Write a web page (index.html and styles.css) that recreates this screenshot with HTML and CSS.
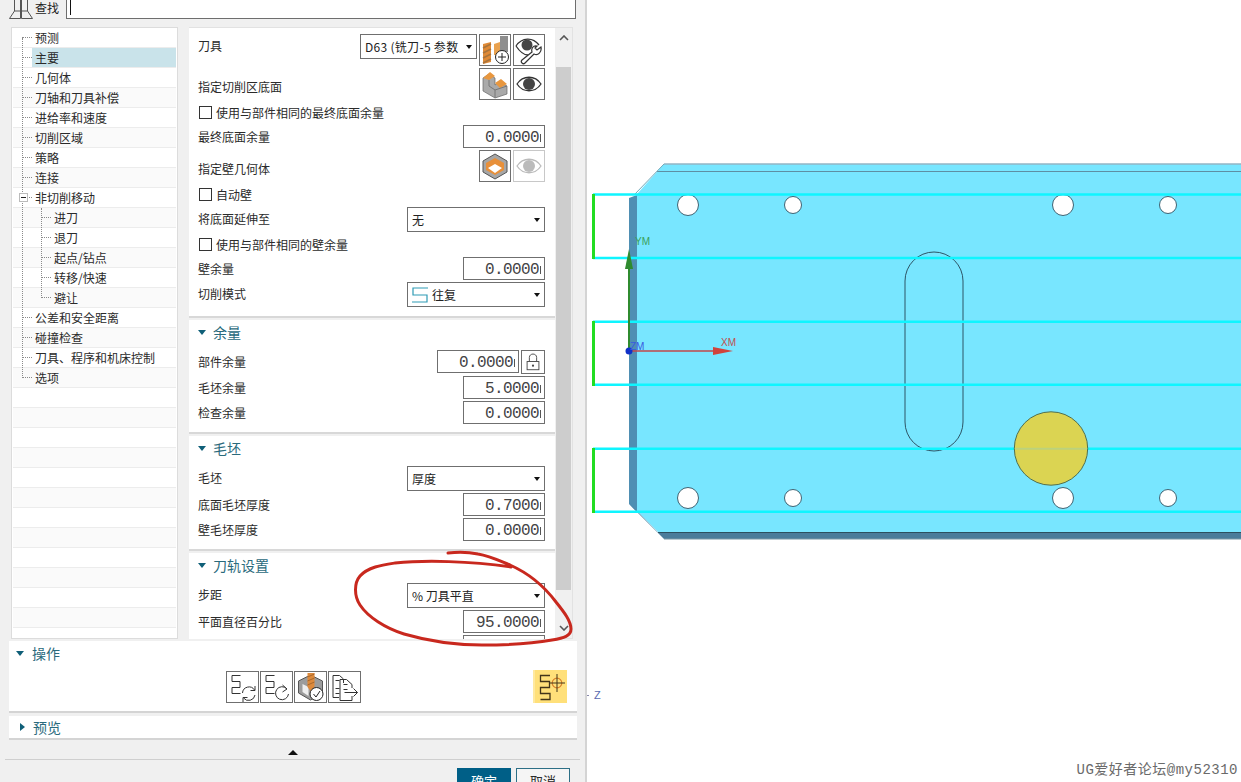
FILE: index.html
```html
<!DOCTYPE html>
<html lang="zh">
<head>
<meta charset="utf-8">
<title>UG</title>
<link rel="stylesheet" href="styles.css">
</head>
<body>
<div class="app">
  <div class="dialog">
    <div class="find">
      <svg class="bino" viewBox="0 0 24 19"><path d="M5.500 0 V11 L.5 18.500 H11.500 V0 M5.500 11 H11.500 M12.500 0 V18.500 H23.500 L18.500 11 V0 M12.500 11 H18.500 M11.500 5.500 H12.500" fill="none" stroke="#555" stroke-width="1"/></svg>
      <span class="find-label">查找</span>
      <div class="find-input"><i class="caret"></i></div>
    </div>
    <div class="main">
      <div class="tree">
        <i class="vline1"></i><i class="vline2"></i>
        <div class="node">预测</div>
        <div class="node sel">主要</div>
        <div class="node">几何体</div>
        <div class="node">刀轴和刀具补偿</div>
        <div class="node">进给率和速度</div>
        <div class="node">切削区域</div>
        <div class="node">策略</div>
        <div class="node">连接</div>
        <div class="node"><i class="minus"></i>非切削移动</div>
        <div class="node sub">进刀</div>
        <div class="node sub">退刀</div>
        <div class="node sub">起点/钻点</div>
        <div class="node sub">转移/快速</div>
        <div class="node sub">避让</div>
        <div class="node">公差和安全距离</div>
        <div class="node">碰撞检查</div>
        <div class="node">刀具、程序和机床控制</div>
        <div class="node">选项</div>
        <div class="node empty"></div><div class="node empty"></div><div class="node empty"></div><div class="node empty"></div>
        <div class="node empty"></div><div class="node empty"></div><div class="node empty"></div><div class="node empty"></div>
        <div class="node empty"></div><div class="node empty"></div><div class="node empty"></div><div class="node empty"></div><div class="node empty"></div>
      </div>
      <div class="panel">
        <div class="sections">
          <section class="sec first">
            <div class="row r34">
              <span class="lbl">刀具</span>
              <div class="tools">
                <div class="combo c-tool"><span class="clip">D63 (铣刀-5 参数</span><i class="arrow"></i></div>
                <button class="ib"><svg viewBox="0 0 30 30"><path d="M3 9 L11 7 V27 L3 29 Z" fill="#e08a36"/><path d="M3 13 L11 9 M3 18 L11 14 M3 23 L11 19 M3 28 L11 24" stroke="#a8743c" stroke-width="1.600"/><path d="M14 9 L20 7 V20 H14 Z" fill="#e9a24f"/><path d="M20 1 H28 V17 H20 Z" fill="#8e8e8e"/><circle cx="22" cy="22" r="6.500" fill="#fff" stroke="#222"/><path d="M22 18 V26 M18 22 H26" stroke="#222"/></svg></button>
                <button class="ib"><svg viewBox="0 0 30 30"><path d="M2 11 C8 2 19 2 25 10" fill="none" stroke="#333" stroke-width="1.300"/><path d="M2 11 C6 17 10 20 14 20" fill="none" stroke="#333" stroke-width="1.300"/><circle cx="13" cy="10" r="5.500" fill="#444"/><path d="M27 12 L23 15 L21 13 L23 11 C19 10 17 14 18 17 L8 25 C6 27 9 30 11 28 L20 19 C24 21 28 17 27 12 Z" fill="#fff" stroke="#333" stroke-width="1.200"/></svg></button>
              </div>
            </div>
            <div class="row r2">
              <span class="lbl low">指定切削区底面</span>
              <div class="tools">
                <button class="ib"><svg viewBox="0 0 30 30"><path d="M3 9 L9 5 L15 9 V16 L19 13 L27 17 V25 L15 29 L3 22 Z" fill="#a9a9a9" stroke="#666" stroke-width=".7"/><path d="M3 9 L10 3 L15 7 L9 11 Z M15 14 L21 10 L27 15 L20 19 Z" fill="#e8973f"/><path d="M9 11 V17 L15 21 V29" fill="none" stroke="#777"/><path d="M15 21 L27 17" stroke="#777"/></svg></button>
                <button class="ib"><svg viewBox="0 0 30 30"><path d="M3 15 C9 6 21 6 27 15 C21 24 9 24 3 15 Z" fill="#fff" stroke="#333" stroke-width="1.300"/><circle cx="15" cy="15" r="6" fill="#444"/></svg></button>
              </div>
            </div>
            <div class="row r25"><label class="chk"><i class="box"></i>使用与部件相同的最终底面余量</label></div>
            <div class="row r25"><span class="lbl">最终底面余量</span><div class="num"><span>0.0000</span></div></div>
            <div class="row r32">
              <span class="lbl low">指定壁几何体</span>
              <div class="tools">
                <button class="ib"><svg viewBox="0 0 30 30"><path d="M15 3 L27 10 V21 L15 28 L3 21 V10 Z" fill="#a6a6a6" stroke="#555"/><path d="M15 7 L24 12 V19 L15 24 L6 19 V12 Z" fill="#e8903a"/><path d="M8 17 L15 13 L22 17 L15 22 Z" fill="#fff"/></svg></button>
                <button class="ib off"><svg viewBox="0 0 30 30"><path d="M3 15 C9 6 21 6 27 15 C21 24 9 24 3 15 Z" fill="#fff" stroke="#bbb" stroke-width="1.300"/><circle cx="15" cy="15" r="6" fill="#bbb"/></svg></button>
              </div>
            </div>
            <div class="row r25"><label class="chk"><i class="box"></i>自动壁</label></div>
            <div class="row r25"><span class="lbl">将底面延伸至</span><div class="combo"><span>无</span><i class="arrow"></i></div></div>
            <div class="row r25"><label class="chk"><i class="box"></i>使用与部件相同的壁余量</label></div>
            <div class="row r25"><span class="lbl">壁余量</span><div class="num"><span>0.0000</span></div></div>
            <div class="row r26"><span class="lbl">切削模式</span><div class="combo"><svg class="zig" viewBox="0 0 16 16"><path d="M16 1 H1 V8 H15 V15 H0" fill="none" stroke="#2f9bb5" stroke-width="1.200"/></svg><span>往复</span><i class="arrow"></i></div></div>
          </section>
          <section class="sec s2">
            <h3 class="head"><i class="tri"></i>余量</h3>
            <div class="row r26 top4">
              <span class="lbl">部件余量</span>
              <div class="tools"><div class="num"><span>0.0000</span></div>
                <button class="ib lock"><svg viewBox="0 0 22 22"><rect x="4.500" y="10.500" width="13" height="9" fill="#fff" stroke="#444"/><path d="M7 10 V6 C7 1 15 1 15 6 V10" fill="none" stroke="#444"/><circle cx="11" cy="15" r="1.200" fill="#444"/></svg></button>
              </div>
            </div>
            <div class="row r25"><span class="lbl">毛坯余量</span><div class="num"><span>5.0000</span></div></div>
            <div class="row r25"><span class="lbl">检查余量</span><div class="num"><span>0.0000</span></div></div>
          </section>
          <section class="sec s3">
            <h3 class="head"><i class="tri"></i>毛坯</h3>
            <div class="row r27 top4"><span class="lbl">毛坯</span><div class="combo"><span>厚度</span><i class="arrow"></i></div></div>
            <div class="row r25"><span class="lbl">底面毛坯厚度</span><div class="num"><span>0.7000</span></div></div>
            <div class="row r25"><span class="lbl">壁毛坯厚度</span><div class="num"><span>0.0000</span></div></div>
          </section>
          <section class="sec last">
            <h3 class="head"><i class="tri"></i>刀轨设置</h3>
            <div class="row r27 top4"><span class="lbl">步距</span><div class="combo"><span>% 刀具平直</span><i class="arrow"></i></div></div>
            <div class="row r25"><span class="lbl">平面直径百分比</span><div class="num"><span>95.0000</span></div></div>
            <div class="row r25"><span class="lbl"></span><div class="num blank"></div></div>
          </section>
        </div>
        <div class="scroll">
          <svg class="sarrow" viewBox="0 0 10 6"><path d="M1 5 L5 1 L9 5" fill="none" stroke="#555" stroke-width="1.600"/></svg>
          <div class="thumb"></div>
          <svg class="sarrow" viewBox="0 0 10 6"><path d="M1 1 L5 5 L9 1" fill="none" stroke="#555" stroke-width="1.600"/></svg>
        </div>
      </div>
    </div>
    <section class="wide ops">
      <h3 class="head"><i class="tri"></i>操作</h3>
      <div class="opbar">
        <div class="opgroup">
          <button class="ib"><svg viewBox="0 0 30 30"><path d="M13 3.500 H4.500 V9.500 H12.500 V15.500 H4.500 V21.500 H13" fill="none" stroke="#333"/><path d="M15 21 A6.500 6.500 0 0 1 27 18 M27.500 23 A6.500 6.500 0 0 1 16 26 M27.500 14 V18.500 H23 M15.500 30 V25.500 H20" fill="none" stroke="#333"/></svg></button>
          <button class="ib"><svg viewBox="0 0 30 30"><path d="M13 3.500 H4.500 V9.500 H12.500 V15.500 H4.500 V21.500 H13" fill="none" stroke="#333"/><path d="M25.500 17 A6.500 6.500 0 1 0 27 22 M21 13 L25.500 17 L21 20" fill="none" stroke="#333"/></svg></button>
          <button class="ib"><svg viewBox="0 0 30 30"><path d="M3 9 L15 3 L27 9 V21 L15 28 L3 21 Z" fill="#9c9c9c" stroke="#555"/><path d="M7 20 L7 12 L13 15 V24 Z" fill="#eee"/><path d="M12 1 H19 V15 L15 19 L12 15 Z" fill="#dd8a3c"/><path d="M12 5 L19 2 M12 9 L19 6 M12 13 L19 10" stroke="#a8682c"/><circle cx="21" cy="22" r="6.500" fill="#fff" stroke="#222"/><path d="M18 22 L20.500 25 L24.500 19" fill="none" stroke="#222"/></svg></button>
          <button class="ib"><svg viewBox="0 0 30 30"><path d="M3.500 3.500 H10 L14 7 V11 M3.500 3.500 V25.500 H9.500 M6 8.500 H10 M6 16.500 H10 M6 21.500 H10" fill="none" stroke="#333"/><path d="M10.500 7.500 H17 L22.500 12.500 V16 M10.500 7.500 V28.500 H22.500 V24 M14 12.500 H18 M14 17.500 H18" fill="none" stroke="#333"/><path d="M15 20.500 H28 M24 16.500 L28 20.500 L24 24.500" fill="none" stroke="#333"/></svg></button>
        </div>
        <button class="ib active"><svg viewBox="0 0 32 32"><path d="M15 4.500 H5.500 V10.500 H14.500 V16.500 H5.500 V22.500 H15 V28.500 H5.500" fill="none" stroke="#43351a" stroke-width="1.300"/><circle cx="22" cy="12" r="4.800" fill="none" stroke="#d9822b" stroke-width="1.200"/><path d="M22 3 V21 M14 12 H30" stroke="#43351a"/></svg></button>
      </div>
    </section>
    <section class="wide prev">
      <h3 class="head"><i class="tri closed"></i>预览</h3>
    </section>
    <div class="collapse"><i></i></div>
    <div class="actions">
      <button class="btn ok">确定</button>
      <button class="btn cancel">取消</button>
    </div>
  </div>
  <div class="canvas">
    <svg class="model" viewBox="587 0 654 782">
      <path d="M664 164 H1241 V532 H658 L637 511 V194 Z" fill="#78e6ff"/>
      <path d="M664 164 H1241" stroke="#93b4c4" stroke-width="1.500"/>
      <path d="M657 171.500 H1241" stroke="#5e8fa3" stroke-width="1"/>
      <path d="M664 164 L635 194" stroke="#6fa9bb" stroke-width="1"/>
      <path d="M637 195 L629 198 V504 L637 512 Z" fill="#4f8fb3"/>
      <path d="M637 511 L629 504 L664 539 H1241 V532.500 H658 Z" fill="#4a7c9a"/>
      <path d="M658 532.500 H1241" stroke="#2c4f5f" stroke-width="1"/>
      <path d="M664 539 H1241" stroke="#7b98a5" stroke-width="1"/>
      <g fill="#fff" stroke="#3f6373" stroke-width="1">
        <circle cx="688" cy="205" r="10.500"/><circle cx="1063" cy="205" r="10.500"/>
        <circle cx="688" cy="498" r="10.500"/><circle cx="1063" cy="498" r="10.500"/>
        <circle cx="793" cy="205" r="8.500"/><circle cx="1168" cy="205" r="8.500"/>
        <circle cx="793" cy="498" r="8.500"/><circle cx="1168" cy="498" r="8.500"/>
      </g>
      <rect x="905" y="252" width="58" height="199" rx="29" fill="none" stroke="#2d5566" stroke-width="1"/>
      <g stroke="#0ff5ff" stroke-width="2.500">
        <path d="M593 194.500 H1241"/><path d="M593 258 H1241"/><path d="M593 321.700 H1241"/>
        <path d="M593 384.700 H1241"/><path d="M593 448.700 H1241"/><path d="M593 511.700 H1241"/>
      </g>
      <circle cx="1051" cy="448.500" r="36.700" fill="#dbd452" stroke="#4f6f50" stroke-width="1"/>
      <path d="M1015 448.700 H1087" stroke="#bcd27c" stroke-width="2"/>
      <g stroke="#22dd22" stroke-width="3">
        <path d="M593.500 194 V259"/><path d="M593.500 321 V386"/><path d="M593.500 448 V513"/>
      </g>
      <path d="M629 351 V262" stroke="#2f8b2f" stroke-width="2"/>
      <path d="M629 249 L633 269 H625 Z" fill="#2f8b2f"/>
      <path d="M629 351 H716" stroke="#c2474a" stroke-width="1.500"/>
      <path d="M733 351 L713 347 V355 Z" fill="#d0433c"/>
      <circle cx="629" cy="351" r="3.500" fill="#1030c8"/>
      <text x="635" y="245" class="ax ax-y">YM</text>
      <text x="630" y="350" class="ax ax-z">ZM</text>
      <text x="721" y="346" class="ax ax-x">XM</text>
      <path d="M586 695.500 H589" stroke="#8888aa"/>
      <text x="594" y="699" class="ax ax-z2">Z</text>
    </svg>
    <div class="mark">UG爱好者论坛@my52310</div>
  </div>
  <svg class="ink" viewBox="0 0 1241 782">
    <path d="M448 553 C458 552 468 552 478 554 C490 556 500 561 510 565 C528 573 544 586 556 602 C564 612 571 621 571 629 C571 636 564 638 552 640 C530 644 505 645 482 645 C455 645 428 641 404 634 C385 628 368 617 360 605 C354 596 354 583 360 576 C368 567 382 565 395 563 C425 560 470 561 511 567" fill="none" stroke="#c8281e" stroke-width="3" stroke-linecap="round"/>
  </svg>
</div>
</body>
</html>
```
FILE: styles.css
```css
* { box-sizing: border-box; }
html, body { margin: 0; padding: 0; height: 100%; background: #fff; overflow: hidden; }
body { font-family: "Noto Sans CJK SC", "Liberation Sans", sans-serif; font-size: 12px; color: #222; }
i { display: block; font-style: normal; }

.app { position: relative; display: flex; width: 1241px; height: 782px; overflow: hidden; }
.dialog { flex: none; width: 587px; height: 782px; background: #f0f0f0; border-right: 2px solid #d4d4d4; display: flex; flex-direction: column; overflow: hidden; }

.find { display: flex; align-items: center; height: 19px; flex: none; padding-left: 9px; }
.bino { width: 24px; height: 19px; flex: none; }
.find-label { width: 33px; padding-left: 2px; font-size: 12px; line-height: 15px; margin-top: -5px; }
.find-input { width: 510px; height: 19px; background: #fff; border: 1px solid #6e6e6e; border-top: 0; padding: 0 0 0 3px; }
.caret { width: 1px; height: 15px; background: #111; }

.main { display: flex; flex: none; height: 612px; margin-top: 8px; padding-left: 11px; }
.tree { position: relative; flex: none; width: 167px; height: 612px; background: #fff; border: 1px solid #dcdcdc; padding: 0 1px; overflow: hidden; }
.node { position: relative; height: 20px; line-height: 19px; padding-left: 22px; border-bottom: 1px solid #ececec; background: #fff; white-space: nowrap; color: #2a2a2a; }
.node:nth-child(even) { background: #fafafa; }
.node::before { content: ""; position: absolute; left: 9px; top: 9px; width: 10px; border-top: 1px dotted #8a8a8a; }
.node.sub { padding-left: 41px; }
.node.sub::before { left: 28px; }
.node.empty::before { display: none; }
.node.sel { background: linear-gradient(#c9e3ea, #c9e3ea) 19px 0 / 144px 100% no-repeat, #fff; }
.vline1 { position: absolute; left: 10px; top: 10px; height: 340px; border-left: 1px dotted #8a8a8a; z-index: 1; }
.vline2 { position: absolute; left: 29px; top: 180px; height: 90px; border-left: 1px dotted #8a8a8a; z-index: 1; }
.minus { position: absolute; left: 6px; top: 5px; width: 9px; height: 9px; background: #fff; border: 1px solid #bbb; z-index: 2; }
.minus::after { content: ""; position: absolute; left: 1px; top: 3px; width: 5px; height: 1px; background: #222; }

.panel { display: flex; flex: none; width: 384px; height: 612px; margin-left: 11px; background: #f0f0f0; border: 1px solid #e2e2e2; border-left: 0; }
.sections { flex: none; width: 366px; height: 611px; overflow: hidden; display: flex; flex-direction: column; }
.sec { flex: none; background: #fff; padding: 0 10px 0 9px; border-bottom: 2px solid #d8d8d8; margin-bottom: 2px; }
.sec.first { height: 290px; padding-top: 6px; }
.sec.s2 { height: 114px; }
.sec.s3 { height: 115px; }
.sec.last { height: 90px; border-bottom: 0; margin-bottom: 0; }

.head { display: flex; align-items: center; height: 26px; margin: 0; padding-bottom: 2px; font-size: 14px; font-weight: 400; color: #2a6a7c; }
.tri { width: 0; height: 0; border-left: 4.5px solid transparent; border-right: 4.5px solid transparent; border-top: 5px solid #0f5f78; margin-right: 7px; }
.tri.closed { border-top: 4.5px solid transparent; border-bottom: 4.5px solid transparent; border-left: 5px solid #0f5f78; border-right: 0; margin: 0 8px 0 4px; }
.wide .tri { margin-right: 8px; }

.row { display: flex; align-items: flex-start; justify-content: space-between; flex: none; }
.r34 { height: 34px; }
.r2 { height: 32px; }
.r32 { height: 32px; }
.r25 { height: 25px; }
.r26 { height: 26px; }
.r27 { height: 27px; }
.top4 { margin-top: 4px; }
.lbl { line-height: 24px; white-space: nowrap; color: #2a2a2a; }
.lbl.low { line-height: 38px; }
.tools { display: flex; gap: 2px; align-items: flex-start; }
.chk { display: flex; align-items: center; gap: 4px; height: 25px; padding-left: 1px; color: #2a2a2a; }
.box { width: 13px; height: 13px; background: #fff; border: 1px solid #333; }

.ib { flex: none; width: 32px; height: 32px; padding: 0; background: #fff; border: 1px solid #6f6f6f; display: flex; align-items: center; justify-content: center; }
.ib svg { width: 30px; height: 30px; display: block; }
.ib.off { border-color: #c8c8c8; }
.ib.lock { width: 24px; height: 24px; }
.ib.lock svg { width: 20px; height: 20px; }
.ib.active { width: 34px; height: 33px; border: 0; border-left: 2px solid #ffe99f; background: #ffe07a; }
.ib.active svg { width: 32px; height: 32px; }

.combo { display: flex; align-items: center; position: relative; width: 138px; height: 25px; padding: 0 4px; background: #fff; border: 1px solid #6f6f6f; line-height: 23px; white-space: nowrap; }
.c-tool { width: 117px; letter-spacing: .3px; }
.clip { overflow: hidden; width: 98px; }
.arrow { position: absolute; right: 4px; top: 10px; width: 0; height: 0; border-left: 3.5px solid transparent; border-right: 3.5px solid transparent; border-top: 4px solid #111; }
.zig { width: 16px; height: 16px; margin-right: 4px; flex: none; }

.num { display: flex; justify-content: flex-end; align-items: center; flex: none; width: 82px; height: 23px; padding: 2px 3px 0 0; background: #fff; border: 1px solid #6f6f6f; font-family: "Liberation Mono", monospace; font-size: 16px; letter-spacing: -.6px; line-height: 20px; color: #444; }
.num::after { content: ""; flex: none; width: 1px; height: 8px; margin-left: 1px; background: #555; }
.num.blank::after { display: none; }

.scroll { display: flex; flex-direction: column; align-items: center; flex: none; width: 17px; height: 611px; }
.sarrow { flex: none; width: 10px; height: 6px; margin: 7px 0 10px; }
.sarrow:last-child { margin: 35px 0 0; }
.thumb { flex: none; width: 15px; height: 523px; margin-top: 16px; background: #cdcdcd; }

.wide { flex: none; width: 568px; margin-left: 9px; background: #fff; border-bottom: 2px solid #d4d4d4; padding: 0 10px 0 7px; }
.ops { margin-top: 2px; height: 72px; }
.prev { margin-top: 3px; height: 24px; }
.prev .head { height: 22px; padding-bottom: 0; }
.opbar { display: flex; justify-content: flex-end; height: 34px; margin-top: 3px; }
.opgroup { display: flex; gap: 1px; margin-right: 172px; padding-top: 1px; }
.opgroup .ib { width: 33px; }
.opgroup .ib svg { width: 31px; }

.collapse { flex: none; height: 20px; margin: 0 5px; border-bottom: 1px solid #cfcfcf; display: flex; justify-content: center; align-items: flex-start; padding-top: 10px; }
.collapse i { width: 0; height: 0; border-left: 5px solid transparent; border-right: 5px solid transparent; border-bottom: 5px solid #111; }
.actions { flex: none; display: flex; justify-content: flex-end; gap: 5px; margin-top: 8px; padding-right: 15px; }
.btn { flex: none; width: 54px; height: 26px; padding: 0; font: inherit; font-size: 13px; line-height: 24px; }
.ok { background: #005f87; border: 1px solid #005f87; color: #fff; }
.cancel { background: #f5f5f5; border: 1px solid #2d6f86; color: #2a2a2a; }

.canvas { position: relative; flex: none; width: 654px; height: 782px; background: #fff; }
.model { display: block; width: 654px; height: 782px; }
.ax { font-family: "Liberation Sans", sans-serif; font-size: 10px; }
.ax-y { fill: #3aa05a; }
.ax-z { fill: #3a5ae0; }
.ax-x { fill: #c05050; }
.ax-z2 { fill: #5a6ab0; font-size: 11px; }
.mark { position: absolute; right: 3px; bottom: 3px; font-family: "Liberation Mono", "Noto Sans CJK SC", monospace; font-size: 14px; line-height: 18px; letter-spacing: .5px; color: #6a6a6a; white-space: nowrap; }
.ink { position: absolute; left: 0; top: 0; width: 1241px; height: 782px; pointer-events: none; }
```
